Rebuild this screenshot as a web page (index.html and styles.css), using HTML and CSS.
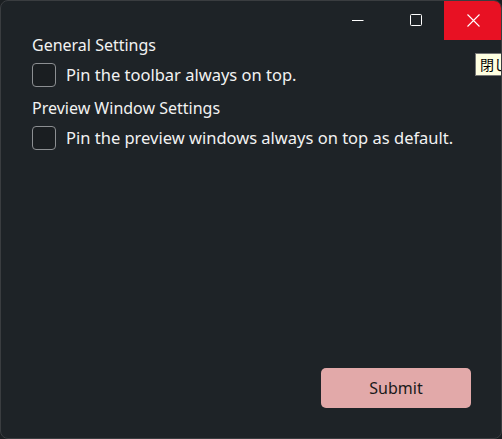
FILE: index.html
```html
<!DOCTYPE html>
<html lang="en">
<head>
    <meta charset="UTF-8">
    <meta name="viewport" content="width=device-width, initial-scale=1.0">
    <title>Settings</title>
    <link rel="stylesheet" href="styles.css">
</head>
<body>
    <div class="window">
        <div class="caption">
            <button class="caption-btn" aria-label="Minimize">
                <svg width="12" height="12" viewBox="0 0 12 12"><path d="M0 6.5h11.5" stroke="#fff" stroke-width="1"/></svg>
            </button>
            <button class="caption-btn" aria-label="Maximize">
                <svg width="12" height="12" viewBox="0 0 12 12"><rect x="0.5" y="0.5" width="11" height="11" rx="1" fill="none" stroke="#fff" stroke-width="1"/></svg>
            </button>
            <button class="caption-btn close" aria-label="Close">
                <svg width="13" height="13" viewBox="0 0 13 13"><path d="M0.5 0.5l12 12M12.5 0.5l-12 12" stroke="#fff" stroke-width="1.1"/></svg>
            </button>
        </div>
        <div class="tooltip">閉じる</div>

        <main class="content">
            <div class="section-title">General Settings</div>
            <label class="check-row">
                <span class="box"></span>
                <span>Pin the toolbar always on top.</span>
            </label>
            <div class="section-title second">Preview Window Settings</div>
            <label class="check-row">
                <span class="box"></span>
                <span>Pin the preview windows always on top as default.</span>
            </label>

            <div class="actions">
                <button class="submit">Submit</button>
            </div>
        </main>
    </div>
</body>
</html>
```

FILE: styles.css
```css
html, body {
    margin: 0;
    padding: 0;
    height: 100%;
    background-color: #1b1f22;
}

body {
    font-family: "Noto Sans", "Open Sans", sans-serif;
    color: #f2f2f2;
}

.window {
    position: relative;
    box-sizing: border-box;
    height: 439px;
    width: 502px;
    background-color: #1e2327;
    border: 1px solid #3a3d40;
    border-radius: 8px;
    overflow: hidden;
    display: flex;
    flex-direction: column;
}

.caption {
    position: absolute;
    top: -1px;
    right: -1px;
    display: flex;
}

.caption-btn {
    width: 56px;
    height: 40px;
    border: none;
    background: transparent;
    padding: 0;
    display: flex;
    align-items: center;
    justify-content: center;
}

.caption-btn:first-child {
    padding-right: 4px;
}

.caption-btn.close {
    width: 58px;
    background-color: #e81123;
}

.tooltip {
    position: absolute;
    top: 52px;
    left: 474px;
    height: 21px;
    padding: 0 4px;
    background-color: #ffffe1;
    border: 1px solid #767676;
    color: #000;
    font-family: "Noto Sans CJK JP", sans-serif;
    font-size: 14px;
    line-height: 21px;
    white-space: nowrap;
}

.content {
    flex: 1;
    display: flex;
    flex-direction: column;
    padding: 34px 30px 30px 31px;
}

.section-title {
    font-size: 16px;
    line-height: 20px;
}

.section-title.second {
    margin-top: 11px;
}

.check-row {
    display: flex;
    align-items: center;
    gap: 10px;
    margin-top: 8px;
    font-size: 16.5px;
    line-height: 24px;
}

.box {
    box-sizing: border-box;
    width: 24px;
    height: 24px;
    border: 1px solid #8c8f92;
    border-radius: 4px;
    background-color: #1a1e21;
}

.actions {
    margin-top: auto;
    display: flex;
    justify-content: flex-end;
}

.submit {
    width: 150px;
    height: 40px;
    border: none;
    border-radius: 5px;
    background-color: #e2a9a9;
    color: #1a1a1a;
    font-family: "Noto Sans", sans-serif;
    font-size: 16px;
}
```
